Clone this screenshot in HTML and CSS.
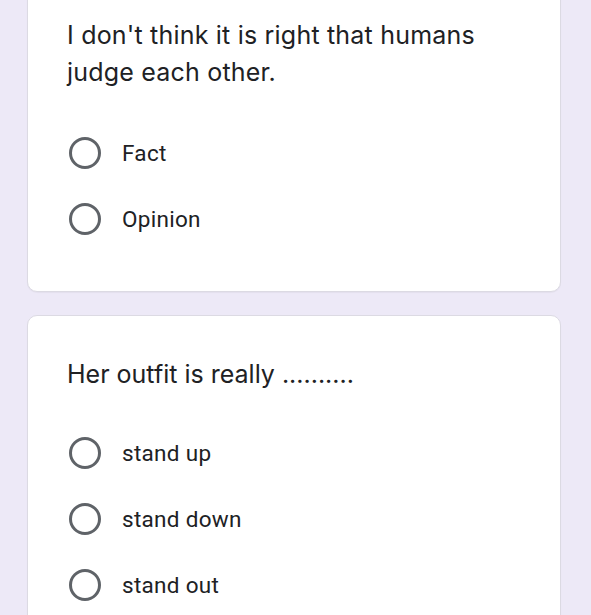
FILE: index.html
```html
<!DOCTYPE html>
<html>
<head>
<meta charset="utf-8">
<link rel="stylesheet" href="styles.css">
</head>
<body>
<div class="page">
  <div class="card card-first">
    <div class="question">I don't think it is right that humans judge each other.</div>
    <div class="options">
      <div class="option"><span class="radio"></span><span class="label">Fact</span></div>
      <div class="option"><span class="radio"></span><span class="label">Opinion</span></div>
    </div>
  </div>
  <div class="card card-second">
    <div class="question">Her outfit is really ..........</div>
    <div class="options">
      <div class="option"><span class="radio"></span><span class="label">stand up</span></div>
      <div class="option"><span class="radio"></span><span class="label">stand down</span></div>
      <div class="option"><span class="radio"></span><span class="label">stand out</span></div>
    </div>
  </div>
</div>
</body>
</html>
```

FILE: styles.css
```css
html, body {
  margin: 0;
  padding: 0;
  background: #ede9f7;
  overflow: hidden;
}
.page {
  display: flex;
  flex-direction: column;
  gap: 23px;
  padding: 0 30px 0 27px;
  margin-top: -20px;
}
.card {
  background: #ffffff;
  border: 1px solid #dcdae3;
  border-radius: 10px;
  padding: 0 30px 0 39px;
  box-shadow: 0 1px 1px rgba(0,0,0,0.04);
}
.card-first {
  padding-top: 36px;
  padding-bottom: 39px;
}
.card-second {
  padding-top: 40px;
  padding-bottom: 40px;
}
.question {
  font-family: Inter, "Open Sans", "Liberation Sans", sans-serif;
  font-size: 25px;
  line-height: 37px;
  color: #202124;
  width: 440px;
}
.card-first .question {
  letter-spacing: 0.2px;
}
.card-first .options {
  margin-top: 29px;
}
.card-second .options {
  margin-top: 27px;
}
.option {
  display: flex;
  align-items: center;
  height: 66px;
}
.radio {
  box-sizing: border-box;
  width: 32px;
  height: 32px;
  border: 3px solid #5f6368;
  border-radius: 50%;
  margin-left: 2px;
  flex: none;
}
.label {
  margin-left: 21px;
  font-family: Roboto, "Liberation Sans", sans-serif;
  font-size: 22.5px;
  letter-spacing: 0.3px;
  color: #202124;
}
```
